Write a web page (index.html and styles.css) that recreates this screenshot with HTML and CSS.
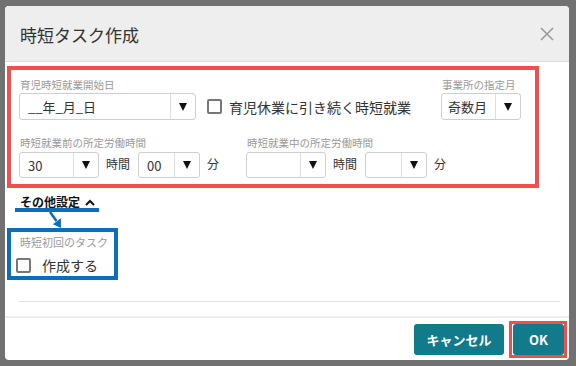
FILE: index.html
```html
<!DOCTYPE html>
<html lang="ja">
<head>
  <meta charset="UTF-8" />
  <meta name="viewport" content="width=device-width, initial-scale=1.0" />
  <title>時短タスク作成</title>
  <link rel="stylesheet" href="styles.css">
</head>
<body>
  <div class="modal" role="dialog" aria-labelledby="modal-title">
    <div class="modal-header">
      <h1 class="modal-title" id="modal-title">時短タスク作成</h1>
      <button class="btn-close" aria-label="閉じる">
        <svg width="14" height="14" viewBox="0 0 14 14"><path d="M1 1 L13 13 M13 1 L1 13" stroke="#9a9a9a" stroke-width="1.6" fill="none"/></svg>
      </button>
    </div>

    <div class="modal-body">
      <div class="mark-red">
        <div class="row row-top">
          <div class="field">
            <div class="label">育児時短就業開始日</div>
            <div class="select select-date">
              <span class="select-text">__年_月_日</span>
              <span class="select-arrow"></span>
            </div>
          </div>
          <div class="check check-inline">
            <span class="check-box"></span>
            <span class="check-text">育児休業に引き続く時短就業</span>
          </div>
          <div class="field field-right">
            <div class="label">事業所の指定月</div>
            <div class="select select-month">
              <span class="select-text">奇数月</span>
              <span class="select-arrow"></span>
            </div>
          </div>
        </div>

        <div class="row row-time">
          <div class="field time-group">
            <div class="label">時短就業前の所定労働時間</div>
            <div class="time-controls">
              <div class="select select-hour">
                <span class="select-text">30</span>
                <span class="select-arrow"></span>
              </div>
              <span class="unit">時間</span>
              <div class="select select-min">
                <span class="select-text">00</span>
                <span class="select-arrow"></span>
              </div>
              <span class="unit">分</span>
            </div>
          </div>
          <div class="field time-group">
            <div class="label">時短就業中の所定労働時間</div>
            <div class="time-controls">
              <div class="select select-hour">
                <span class="select-text"></span>
                <span class="select-arrow"></span>
              </div>
              <span class="unit">時間</span>
              <div class="select select-min">
                <span class="select-text"></span>
                <span class="select-arrow"></span>
              </div>
              <span class="unit">分</span>
            </div>
          </div>
        </div>
      </div>

      <div class="toggle">
        <span>その他設定</span>
        <svg width="10" height="7" viewBox="0 0 10 7"><path d="M1 6 L5 2 L9 6" stroke="#111" stroke-width="2" fill="none"/></svg>
      </div>

      <svg class="pointer" width="18" height="16" viewBox="0 0 18 16">
        <path d="M2 0 L8.5 9" stroke="#0b6ebb" stroke-width="2.5" fill="none"/>
        <polygon points="12.9,6.3 4.9,12.3 13,16" fill="#0b6ebb"/>
      </svg>

      <div class="mark-blue">
        <div class="label label-blue">時短初回のタスク</div>
        <div class="check check-first">
          <span class="check-box"></span>
          <span class="check-text">作成する</span>
        </div>
      </div>

      <hr class="sep" />
    </div>

    <div class="modal-footer">
      <button class="btn btn-cancel">キャンセル</button>
      <div class="mark-ok">
        <button class="btn btn-ok">OK</button>
      </div>
    </div>
  </div>
</body>
</html>
```

FILE: styles.css
```css
* {
  margin: 0; padding: 0; box-sizing: border-box;
}
body {
  background: #717171;
  font-family: "Noto Sans CJK JP", "Noto Sans", sans-serif;
  color: #333;
  width: 576px;
  height: 366px;
  overflow: hidden;
  padding: 6px 0 0 5px;
}

.modal {
  width: 564px;
  height: 354px;
  background: #fff;
  border-radius: 4px;
  display: flex;
  flex-direction: column;
  overflow: hidden;
}

.modal-header {
  height: 56px;
  background: #eeeeee;
  border-bottom: 1px solid #dcdcdc;
  display: flex;
  align-items: center;
  justify-content: space-between;
  padding: 0 15px 0 15px;
}
.modal-title {
  font-size: 17px;
  font-weight: normal;
  color: #333;
  line-height: 1;
  margin-top: 1px;
}
.btn-close {
  background: none;
  border: none;
  width: 14px;
  height: 14px;
  display: flex;
  margin-top: 1px;
}

.modal-body {
  flex: 1;
  padding: 4px 0 0 2px;
}

.mark-red {
  width: 532px;
  border: 4px solid #f24e4e;
  padding: 8px 14px 6px 8px;
}

.row {
  display: flex;
}
.row-top {
  align-items: flex-end;
}
.row-time {
  margin-top: 16px;
}

.label {
  font-size: 10.5px;
  line-height: 14px;
  color: #9a9a9a;
  margin-bottom: 1px;
  padding-left: 1px;
  white-space: nowrap;
}
.row-time .label {
  margin-bottom: 2px;
}

.select {
  display: flex;
  height: 27px;
  border: 1px solid #cfcfcf;
  border-radius: 3px;
  background: #fff;
}
.row-time .select {
  height: 26px;
}
.select-text {
  flex: 1;
  font-size: 13px;
  line-height: 25px;
  padding-left: 8px;
  color: #333;
  white-space: nowrap;
}
.row-time .select-text {
  line-height: 26px;
}
.select-arrow {
  width: 25px;
  border-left: 1px solid #dedede;
  display: flex;
  align-items: center;
  justify-content: center;
}
.select-arrow::after {
  content: "";
  border-left: 4.5px solid transparent;
  border-right: 4.5px solid transparent;
  border-top: 8px solid #111;
}

.select-date { width: 177px; }
.select-month { width: 80px; }
.select-month .select-text { padding-left: 6px; }
.select-hour { width: 80px; }
.select-min { width: 62px; }

.check {
  display: flex;
  align-items: center;
}
.check-box {
  width: 15px;
  height: 15px;
  border: 2px solid #777;
  border-radius: 2px;
  background: #fff;
  flex-shrink: 0;
}
.check-text {
  white-space: nowrap;
}
.check-inline {
  height: 27px;
  margin-left: 11px;
  gap: 7px;
  font-size: 14px;
}
.field-right {
  margin-left: auto;
}

.time-group {
  width: 227px;
}
.time-controls {
  display: flex;
  align-items: center;
}
.unit {
  font-size: 12px;
  margin: -3px 7px 0 7px;
}
.unit + .select {
  margin-left: 1px;
}

.toggle {
  width: 84px;
  height: 16px;
  margin: 8px 0 0 8px;
  padding-left: 5px;
  border-bottom: 4px solid #0b6ebb;
  display: flex;
  align-items: center;
  gap: 5px;
  font-size: 12px;
  font-weight: bold;
  line-height: 12px;
  color: #111;
}

.pointer {
  display: block;
  margin-left: 41px;
}

.mark-blue {
  width: 111px;
  height: 52px;
  border: 4px solid #0b6ebb;
  padding: 3px 0 0 8px;
}
.label-blue {
  font-size: 11px;
}
.check-first {
  height: 20px;
  margin: 6px 0 0 -3px;
  gap: 11px;
  font-size: 14px;
}

.sep {
  border: none;
  border-top: 1px solid #e2e2e2;
  margin: 21px 9px 0 12px;
}

.modal-footer {
  height: 44px;
  border-top: 2px solid #eeeeee;
  display: flex;
  align-items: center;
  justify-content: flex-end;
  gap: 5px;
  padding-right: 2px;
}
.btn {
  height: 31px;
  border: none;
  border-radius: 3px;
  background: #127b8b;
  color: #fff;
  font-family: "Noto Sans CJK JP", "Noto Sans", sans-serif;
  font-size: 13px;
  font-weight: bold;
}
.btn-cancel {
  width: 90px;
}
.mark-ok {
  border: 3px solid #f24e4e;
  padding-left: 1px;
  display: flex;
}
.btn-ok {
  width: 51px;
}
```
